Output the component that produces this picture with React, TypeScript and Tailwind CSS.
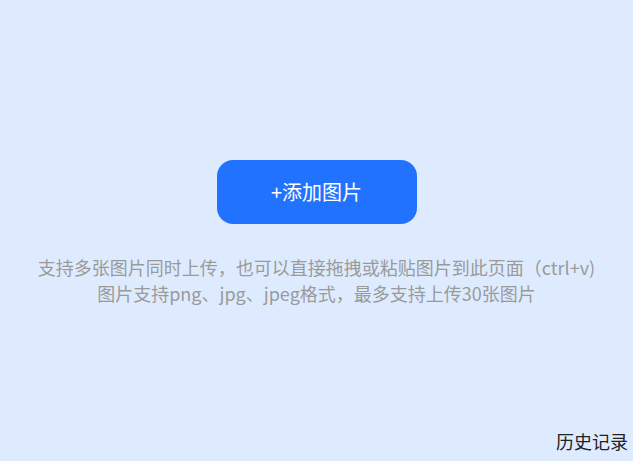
export default function App() {
  return (
    <div
      className="relative flex h-screen w-full flex-col items-center justify-center bg-[#deebff] pt-[4px]"
      style={{ fontFamily: '"Microsoft YaHei", "Noto Sans CJK SC", sans-serif' }}
    >
      <button
        type="button"
        className="flex h-[64px] w-[200px] items-center justify-center rounded-[16px] bg-[#2173ff] text-[20px] text-white"
      >
        +添加图片
      </button>
      <div className="mt-[30px] text-center text-[18px] leading-[26px] text-[#9a9a9a]">
        <p>支持多张图片同时上传，也可以直接拖拽或粘贴图片到此页面（ctrl+v)</p>
        <p>图片支持png、jpg、jpeg格式，最多支持上传30张图片</p>
      </div>
      <div className="absolute bottom-[6px] right-[5px] text-[18px] text-[#222]">历史记录</div>
    </div>
  );
}
